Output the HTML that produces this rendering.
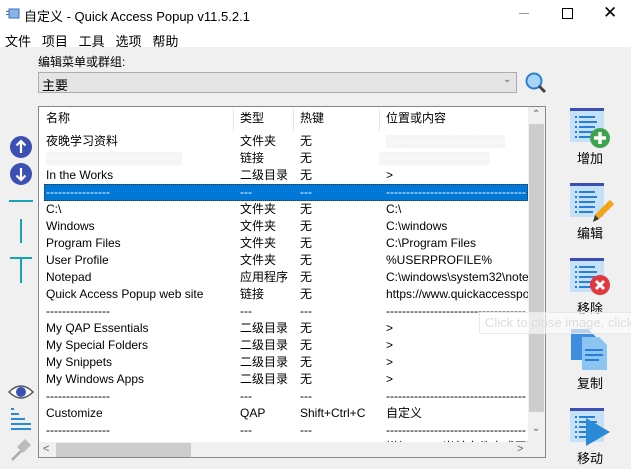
<!DOCTYPE html>
<html><head><meta charset="utf-8"><style>
*{margin:0;padding:0;box-sizing:border-box}
body{width:631px;height:469px;background:#f0f0f0;position:relative;overflow:hidden;font-family:"Liberation Sans","Noto Sans CJK SC",sans-serif;font-size:12px;color:#000}
.a{position:absolute;white-space:nowrap}
#title{left:0;top:0;width:631px;height:30px;background:#fff}
#menu{left:0;top:30px;width:631px;height:17px;background:#fff}
.list{left:38px;top:106px;width:508px;height:352px;border:1px solid #828790;background:#fff;overflow:hidden}
.row{position:absolute;left:0;height:17px;width:490px;line-height:17px}
.row span{position:absolute;top:0}
.c1{left:7px}.c2{left:201px}.c3{left:261px}.c4{left:347px}
.sel{background:#0078d7;color:#fff;outline:1px dotted #333;outline-offset:-1px}
.lbl{font-size:13px;width:40px;text-align:center}
</style></head><body>
<div class="a" id="title"></div>
<svg class="a" style="left:6px;top:8px" width="14" height="12"><rect x="3" y="1" width="10" height="9" fill="#8ab4e8" stroke="#3a6fc0"/><rect x="0" y="3" width="3" height="1" fill="#3a6fc0"/><rect x="0" y="6" width="3" height="1" fill="#3a6fc0"/></svg>
<div class="a" style="left:24px;top:6px;font-size:13px">自定义 - Quick Access Popup v11.5.2.1</div>
<div class="a" style="left:519px;top:13px;width:10px;height:1px;background:#999"></div>
<div class="a" style="left:562px;top:8px;width:11px;height:11px;border:1px solid #000"></div>
<div class="a" style="left:603px;top:3px;font-size:17px">✕</div>
<div class="a" id="menu"></div>
<div class="a" style="left:5px;top:31px;font-size:13px">文件&nbsp;&nbsp; 项目&nbsp;&nbsp; 工具&nbsp;&nbsp; 选项&nbsp;&nbsp; 帮助</div>
<div class="a" style="left:38px;top:53px;font-size:12px">编辑菜单或群组:</div>
<div class="a" style="left:38px;top:72px;width:479px;height:21px;border:1px solid #adadad;background:#e5e5e5"></div>
<div class="a" style="left:42px;top:75px;font-size:13px">主要</div>
<div class="a" style="left:503px;top:74px;font-size:10px;color:#555">⌄</div>
<svg class="a" style="left:524px;top:71px" width="24" height="24"><circle cx="10" cy="10" r="7.5" fill="#a8d4f8" stroke="#2b7fd3" stroke-width="2"/><line x1="15" y1="15" x2="21" y2="21" stroke="#444" stroke-width="3"/></svg>
<div class="a list">
 <div class="row" style="top:1px;height:20px;line-height:20px"><span class="c1">名称</span><span class="c2">类型</span><span class="c3">热键</span><span class="c4">位置或内容</span></div>
 <div class="a" style="left:194px;top:2px;width:1px;height:22px;background:#e5e5e5"></div>
 <div class="a" style="left:254px;top:2px;width:1px;height:22px;background:#e5e5e5"></div>
 <div class="a" style="left:340px;top:2px;width:1px;height:22px;background:#e5e5e5"></div>
 <div class="row" style="top:26px"><span class="c1">夜晚学习资料</span><span class="c2">文件夹</span><span class="c3">无</span><span class="c4" style="color:#ddd">▒▒▒▒▒▒▒▒▒▒▒▒▒▒</span></div>
 <div class="row" style="top:43px"><span class="c1" style="color:#ddd">▒▒▒▒▒▒▒▒▒▒▒▒▒▒▒▒</span><span class="c2">链接</span><span class="c3">无</span><span class="c4" style="color:#ddd;left:340px">▒▒▒▒▒▒▒▒▒▒▒▒▒</span></div>
 <div class="row" style="top:60px"><span class="c1">In the Works</span><span class="c2">二级目录</span><span class="c3">无</span><span class="c4">&gt;</span></div>
 <div class="row sel" style="top:77px;left:5px;width:484px"><span class="c1" style="left:2px">----------------</span><span style="left:196px">---</span><span style="left:256px">---</span><span style="left:342px">-----------------------------------</span></div>
 <div class="row" style="top:94px"><span class="c1">C:\</span><span class="c2">文件夹</span><span class="c3">无</span><span class="c4">C:\</span></div>
 <div class="row" style="top:111px"><span class="c1">Windows</span><span class="c2">文件夹</span><span class="c3">无</span><span class="c4">C:\windows</span></div>
 <div class="row" style="top:128px"><span class="c1">Program Files</span><span class="c2">文件夹</span><span class="c3">无</span><span class="c4">C:\Program Files</span></div>
 <div class="row" style="top:145px"><span class="c1">User Profile</span><span class="c2">文件夹</span><span class="c3">无</span><span class="c4">%USERPROFILE%</span></div>
 <div class="row" style="top:162px"><span class="c1">Notepad</span><span class="c2">应用程序</span><span class="c3">无</span><span class="c4">C:\windows\system32\notepad</span></div>
 <div class="row" style="top:179px"><span class="c1">Quick Access Popup web site</span><span class="c2">链接</span><span class="c3">无</span><span class="c4">https://www.quickaccesspopup</span></div>
 <div class="row" style="top:196px"><span class="c1">----------------</span><span class="c2">---</span><span class="c3">---</span><span class="c4">-----------------------------------</span></div>
 <div class="row" style="top:213px"><span class="c1">My QAP Essentials</span><span class="c2">二级目录</span><span class="c3">无</span><span class="c4">&gt;</span></div>
 <div class="row" style="top:230px"><span class="c1">My Special Folders</span><span class="c2">二级目录</span><span class="c3">无</span><span class="c4">&gt;</span></div>
 <div class="row" style="top:247px"><span class="c1">My Snippets</span><span class="c2">二级目录</span><span class="c3">无</span><span class="c4">&gt;</span></div>
 <div class="row" style="top:264px"><span class="c1">My Windows Apps</span><span class="c2">二级目录</span><span class="c3">无</span><span class="c4">&gt;</span></div>
 <div class="row" style="top:281px"><span class="c1">----------------</span><span class="c2">---</span><span class="c3">---</span><span class="c4">-----------------------------------</span></div>
 <div class="row" style="top:298px"><span class="c1">Customize</span><span class="c2">QAP</span><span class="c3">Shift+Ctrl+C</span><span class="c4">自定义</span></div>
 <div class="row" style="top:315px"><span class="c1">----------------</span><span class="c2">---</span><span class="c3">---</span><span class="c4">-----------------------------------</span></div>
 <div class="row" style="top:332px"><span class="c1">Add Active Folder or Web</span><span class="c2">QAP</span><span class="c3">Shift+Ctrl+A</span><span class="c4">增加Active当前文件夹或网页</span></div>
 <div class="a" style="left:489px;top:0;width:17px;height:335px;background:#f0f0f0"></div>
 <div class="a" style="left:490px;top:17px;width:15px;height:288px;background:#cdcdcd"></div>
 <div class="a" style="left:493px;top:2px;font-size:10px;color:#606060">⌃</div>
 <div class="a" style="left:493px;top:316px;font-size:10px;color:#606060">⌄</div>
 <div class="a" style="left:0;top:335px;width:506px;height:17px;background:#f0f0f0"></div>
 <div class="a" style="left:17px;top:336px;width:135px;height:15px;background:#cdcdcd"></div>
 <div class="a" style="left:4px;top:336px;font-size:11px;color:#606060">&lt;</div>
 <div class="a" style="left:478px;top:336px;font-size:11px;color:#606060">&gt;</div>
</div>
<svg class="a" style="left:0;top:130px" width="38" height="339">
 <circle cx="21" cy="17" r="11" fill="#3c50b4"/><path d="M21 11v12M16.5 15.5L21 11l4.5 4.5" stroke="#fff" stroke-width="2.2" fill="none"/>
 <circle cx="21" cy="44" r="11" fill="#3c50b4"/><path d="M21 38v12M16.5 45.5L21 50l4.5-4.5" stroke="#fff" stroke-width="2.2" fill="none"/>
 <line x1="9" y1="71" x2="33" y2="71" stroke="#1aa3b4" stroke-width="2"/>
 <line x1="21" y1="89" x2="21" y2="113" stroke="#1aa3b4" stroke-width="2"/>
 <line x1="10" y1="128" x2="32" y2="128" stroke="#1aa3b4" stroke-width="2"/><line x1="21" y1="128" x2="21" y2="153" stroke="#1aa3b4" stroke-width="2"/>
 <path d="M9 262Q21 250 33 262Q21 274 9 262Z" fill="#fff" stroke="#555" stroke-width="1.5"/><circle cx="21" cy="262" r="5" fill="#3c50b4"/>
 <rect x="11" y="278" width="3" height="2" fill="#2b8ad6"/><rect x="11" y="283" width="8" height="2" fill="#2b8ad6"/><rect x="11" y="288" width="14" height="2" fill="#2b8ad6"/><rect x="11" y="293" width="20" height="2" fill="#2b8ad6"/><rect x="11" y="298" width="20" height="2" fill="#2b8ad6"/>
 <path d="M12 330L21 321" stroke="#aaa" stroke-width="2.5"/><path d="M17 317L25 309L31 315L23 323Z" fill="#bbb"/>
</svg>
<svg class="a" style="left:565px;top:105px" width="66" height="364">
 <defs><g id="doc"><rect x="5" y="3" width="34" height="3" fill="#3c50b4"/><rect x="5" y="6" width="34" height="31" fill="#c5e1f8"/><g fill="#2b7fd3"><rect x="10" y="11" width="2" height="2"/><rect x="14" y="11" width="16" height="2"/><rect x="10" y="16" width="2" height="2"/><rect x="14" y="16" width="18" height="2"/><rect x="10" y="21" width="2" height="2"/><rect x="14" y="21" width="16" height="2"/><rect x="10" y="26" width="2" height="2"/><rect x="14" y="26" width="16" height="2"/><rect x="10" y="31" width="2" height="2"/><rect x="14" y="31" width="14" height="2"/></g></g></defs>
 <use href="#doc"/><circle cx="35" cy="33" r="10" fill="#3fa34d"/><path d="M35 27v12M29 33h12" stroke="#fff" stroke-width="3.5"/>
 <use href="#doc" y="75"/><path d="M32 112L47 97" stroke="#f2a418" stroke-width="6"/><path d="M28 117l2-7 4 4z" fill="#333"/>
 <use href="#doc" y="150"/><circle cx="35" cy="180" r="10" fill="#e0383e"/><path d="M31 176l8 8M39 176l-8 8" stroke="#fff" stroke-width="3"/>
 <path d="M6 224h17l8 8v23H6z" fill="#3f8de0"/><path d="M17 232h17l8 8v25H17z" fill="#8cc4f2"/><g fill="#2b7fd3"><rect x="20" y="244" width="18" height="2"/><rect x="20" y="249" width="18" height="2"/><rect x="20" y="254" width="14" height="2"/></g>
 <use href="#doc" y="300"/><path d="M21 313L45 327L21 341Z" fill="#2b8ad6"/>
</svg>
<div class="a lbl" style="left:570px;top:148px">增加</div>
<div class="a lbl" style="left:570px;top:223px">编辑</div>
<div class="a lbl" style="left:570px;top:298px">移除</div>
<div class="a lbl" style="left:570px;top:373px">复制</div>
<div class="a lbl" style="left:570px;top:448px">移动</div>
<div class="a" style="left:479px;top:312px;width:160px;height:22px;border:1px solid #e8e8e8;background:rgba(255,255,255,0.6);color:#ddd;font-size:13px;line-height:20px;padding-left:5px">Click to close image, click</div>
</body></html>
